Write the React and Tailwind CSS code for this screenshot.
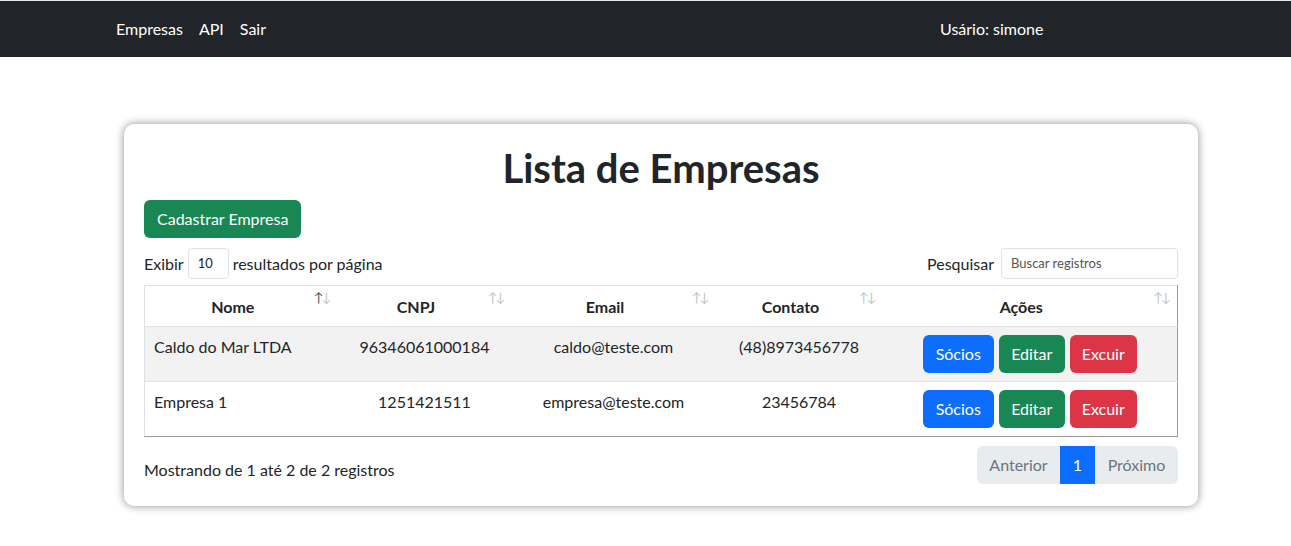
import React from 'react';

const rows = [
  { nome: 'Caldo do Mar LTDA', cnpj: '96346061000184', email: 'caldo@teste.com', contato: '(48)8973456778' },
  { nome: 'Empresa 1', cnpj: '1251421511', email: 'empresa@teste.com', contato: '23456784' },
];

function SortIcon({ active }) {
  return (
    <span className="absolute right-[8px] top-[5px] text-[13px] leading-none tracking-[-2px] text-[#c4c4c4] font-normal">
      <span className={active ? 'text-[#555]' : ''}>↑</span>
      <span>↓</span>
    </span>
  );
}

export default function App() {
  const font = { fontFamily: 'Lato, "Noto Sans", sans-serif' };
  return (
    <div className="min-h-screen bg-white text-[#212529] text-[16px]" style={font}>
      {/* --- NAVBAR --- */}
      <nav className="h-[57px] bg-[#212529] border-t border-[#e5e5e5] flex items-center pl-[108px]">
        <div className="w-[832px] flex items-center">
          <a className="px-[8px] text-white" href="#">Empresas</a>
          <a className="px-[8px] text-white" href="#">API</a>
          <a className="px-[8px] text-white" href="#">Sair</a>
        </div>
        <span className="text-white">Usário: simone</span>
      </nav>

      {/* --- CARD --- */}
      <div className="ml-[124px] mt-[67px] w-[1074px] rounded-[10px] bg-white shadow-[0_0_8px_rgba(0,0,0,0.45)] px-[20px] pt-[20px] pb-[22px]">
        <h1 className="text-center text-[40px] font-bold leading-[1.2] mb-[8px]">Lista de Empresas</h1>

        <button className="bg-[#198754] text-white rounded-[6px] h-[38px] px-[13px] mb-[10px]">
          Cadastrar Empresa
        </button>

        <div className="flex items-center justify-between mb-[6px]">
          <div className="flex items-center">
            <span>Exibir</span>
            <div className="mx-[4px] w-[41px] h-[31px] border border-[#dee2e6] rounded-[4px] flex items-center pl-[9px] text-[13px]">10</div>
            <span>resultados por página</span>
          </div>
          <div className="flex items-center">
            <span className="mr-[7px]">Pesquisar</span>
            <div className="w-[177px] h-[31px] border border-[#dee2e6] rounded-[4px] flex items-center pl-[9px] text-[13px] text-[#555]">Buscar registros</div>
          </div>
        </div>

        <table className="w-full border-collapse border-t border-l border-[#dee2e6] border-r-[1.5px] border-b-[1.5px] border-r-[#999] border-b-[#999] table-fixed">
          <colgroup>
            <col className="w-[193px]" />
            <col className="w-[174px]" />
            <col className="w-[204px]" />
            <col className="w-[167px]" />
            <col />
          </colgroup>
          <thead>
            <tr className="h-[41px] border-b border-[#dee2e6]">
              {['Nome', 'CNPJ', 'Email', 'Contato', 'Ações'].map((h, i) => (
                <th key={h} className="relative font-bold text-center pr-[26px] pl-[9px] pt-[1px]">
                  {h}
                  <SortIcon active={i === 0} />
                </th>
              ))}
            </tr>
          </thead>
          <tbody>
            {rows.map((r, i) => (
              <tr key={r.nome} className={`h-[55px] ${i === 0 ? 'bg-[#f2f2f2] border-b border-[#dee2e6]' : 'bg-white'}`}>
                <td className="align-top pl-[9px] pt-[8px]">{r.nome}</td>
                <td className="align-top text-center pt-[8px]">{r.cnpj}</td>
                <td className="align-top text-center pt-[8px]">{r.email}</td>
                <td className="align-top text-center pt-[8px]">{r.contato}</td>
                <td className="align-top pt-[8px]">
                  <div className="flex justify-center gap-[5px]">
                    <button className="bg-[#0d6efd] text-white rounded-[6px] h-[38px] w-[71px]">Sócios</button>
                    <button className="bg-[#198754] text-white rounded-[6px] h-[38px] w-[66px]">Editar</button>
                    <button className="bg-[#dc3545] text-white rounded-[6px] h-[38px] w-[67px]">Excuir</button>
                  </div>
                </td>
              </tr>
            ))}
          </tbody>
        </table>

        <div className="flex items-center justify-between mt-[9px]">
          <span className="pt-[10px]">Mostrando de 1 até 2 de 2 registros</span>
          <div className="flex h-[38px] rounded-[6px] overflow-hidden">
            <span className="bg-[#e9ecef] text-[#6c757d] w-[83px] flex items-center justify-center">Anterior</span>
            <span className="bg-[#0d6efd] text-white w-[35px] flex items-center justify-center">1</span>
            <span className="bg-[#e9ecef] text-[#6c757d] w-[83px] flex items-center justify-center">Próximo</span>
          </div>
        </div>
      </div>
    </div>
  );
}
